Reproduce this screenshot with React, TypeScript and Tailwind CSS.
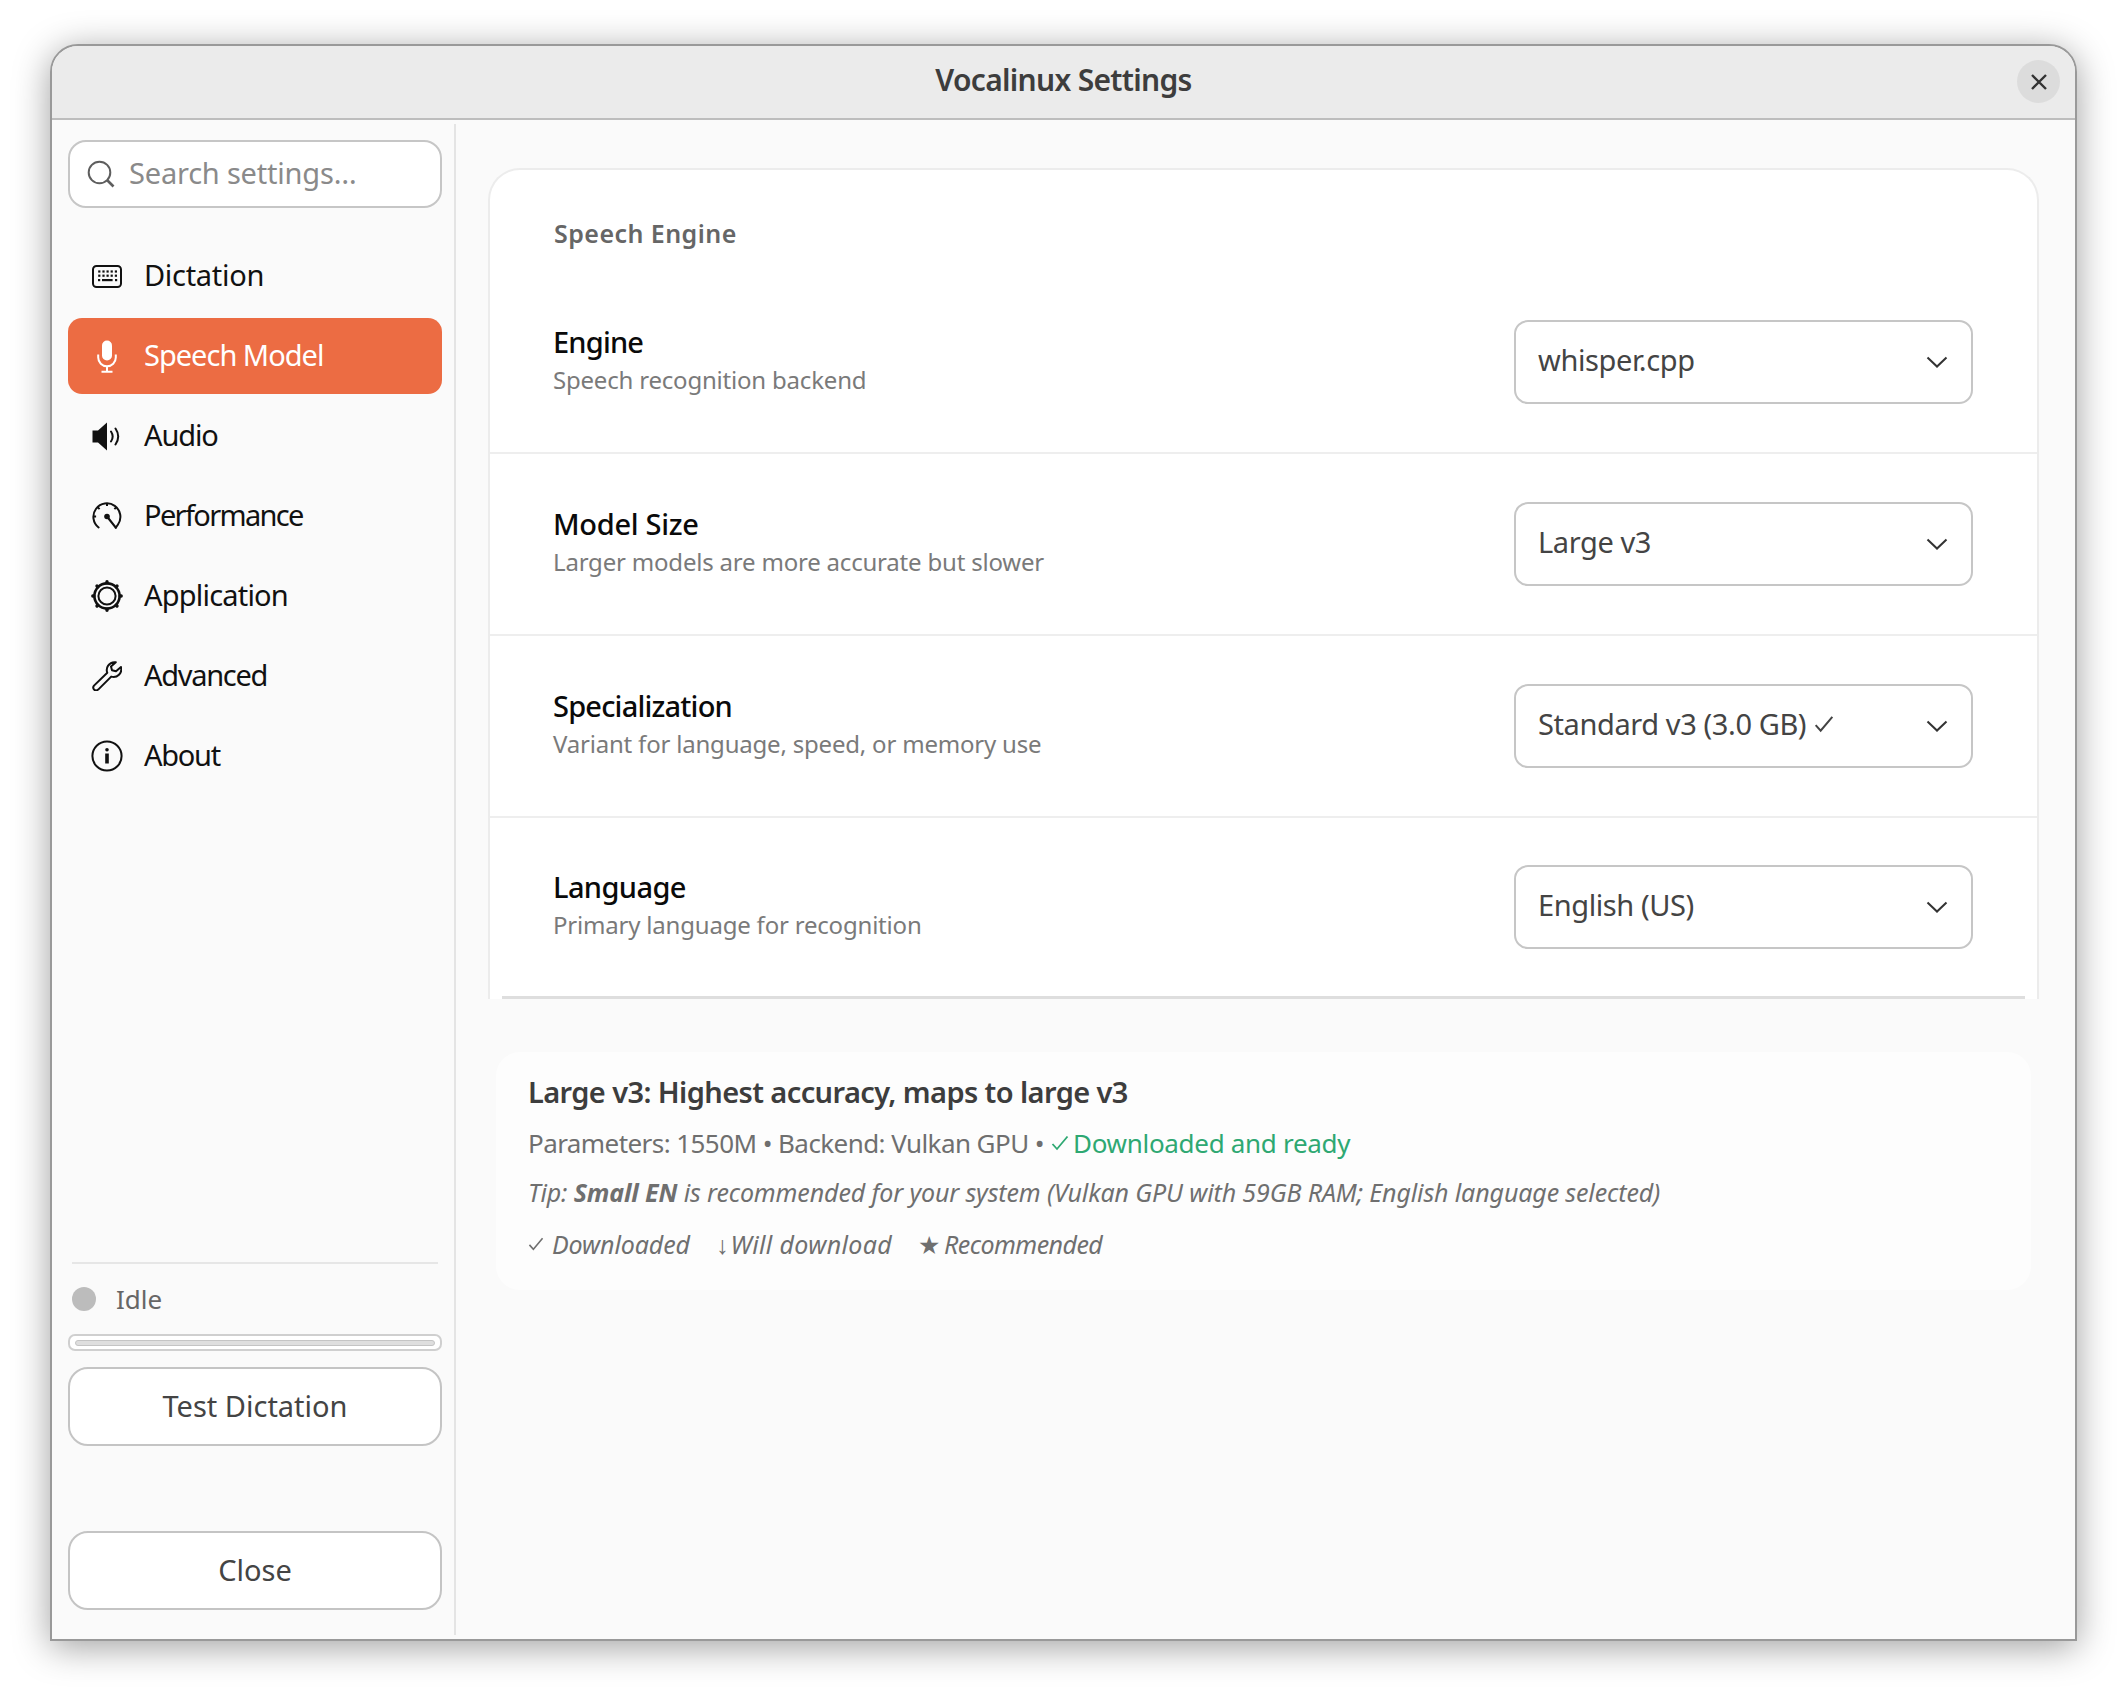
import type { ReactNode } from 'react';

function KeyboardIcon() {
  return (
    <svg viewBox="0 0 30 23" className="h-[23px] w-[30px]" fill="none">
      <rect x="1" y="1" width="28" height="21" rx="3.5" stroke="#111" strokeWidth="2" />
      <g fill="#111">
        <rect x="6.2" y="5.4" width="2.2" height="2.2" /><rect x="10.4" y="5.4" width="2.2" height="2.2" /><rect x="14.5" y="5.4" width="2.2" height="2.2" /><rect x="18.6" y="5.4" width="2.2" height="2.2" /><rect x="22.8" y="5.4" width="2.2" height="2.2" />
        <rect x="6.2" y="9.6" width="2.2" height="2.2" /><rect x="10.4" y="9.6" width="2.2" height="2.2" /><rect x="14.5" y="9.6" width="2.2" height="2.2" /><rect x="18.6" y="9.6" width="2.2" height="2.2" /><rect x="22.8" y="9.6" width="2.2" height="2.2" />
        <rect x="6" y="14" width="2.2" height="2.2" /><rect x="10" y="14" width="10.6" height="2.2" /><rect x="23" y="14" width="2.2" height="2.2" />
      </g>
    </svg>
  );
}

function MicIcon() {
  return (
    <svg viewBox="0 0 20 33" className="h-[33px] w-[20px]" fill="none">
      <rect x="5" y="0.5" width="10" height="20" rx="5" fill="#fff" />
      <path d="M1.2 14.5v3a8.8 8.8 0 0 0 17.6 0v-3M10 26.5v5.2M4.5 31.7h11" stroke="#fff" strokeWidth="2" />
    </svg>
  );
}

function SpeakerIcon() {
  return (
    <svg viewBox="0 0 30 29" className="h-[29px] w-[30px]" fill="none">
      <path d="M0.5 8.5H6L15 0.5v28L6 20.5H0.5z" fill="#111" />
      <path d="M19 9.5c2 3 2 7 0 10M23.5 6.5c3.4 5 3.4 11 0 16" stroke="#111" strokeWidth="2" strokeLinecap="round" />
    </svg>
  );
}

function GaugeIcon() {
  return (
    <svg viewBox="0 0 30 28" className="h-[28px] w-[30px]" fill="none">
      <path d="M6.6 25.5A13.5 13.5 0 1 1 26 22.5L23.8 25.6" stroke="#111" strokeWidth="2" strokeLinecap="round" />
      <path d="M15 1.5v2.6M5.7 5.2l1.9 1.9M24.3 5.2l-1.9 1.9M1.5 14.5h2.6" stroke="#111" strokeWidth="2" />
      <circle cx="15" cy="14.5" r="2.8" fill="#111" />
      <path d="M15 14.5L23.8 25.6" stroke="#111" strokeWidth="2.2" strokeLinecap="round" />
    </svg>
  );
}

function GearIcon() {
  return (
    <svg viewBox="0 0 32 32" className="h-[32px] w-[32px]" fill="none">
      <circle cx="16" cy="16" r="12.6" stroke="#111" strokeWidth="2.6" />
      <circle cx="16" cy="16" r="8.6" stroke="#111" strokeWidth="2" />
      <g stroke="#111" strokeWidth="3.4" strokeLinecap="round">
        <path d="M16 1.8v1M16 29.2v1M1.8 16h1M29.2 16h1M6 6l.7.7M25.3 25.3l.7.7M26 6l-.7.7M6.7 25.3L6 26" />
      </g>
    </svg>
  );
}

function WrenchIcon() {
  return (
    <svg viewBox="0 0 30 30" className="h-[30px] w-[30px]" fill="none">
      <path
        d="M22.5 1.2a7.8 7.8 0 0 0-7.2 10.6L2 24.6a3.2 3.2 0 0 0 0 4 3.2 3.2 0 0 0 4.2 0l13-13a7.8 7.8 0 0 0 9.8-9.6l-5 4.2-4-1-1-3.8 4.8-4.2z"
        stroke="#111"
        strokeWidth="2"
        strokeLinejoin="round"
      />
    </svg>
  );
}

function InfoIcon() {
  return (
    <svg viewBox="0 0 32 32" className="h-[32px] w-[32px]" fill="none">
      <circle cx="16" cy="16" r="14.6" stroke="#111" strokeWidth="2" />
      <rect x="14.2" y="13.5" width="3.6" height="10" fill="#111" />
      <rect x="14.2" y="8" width="3.6" height="3.6" rx="1.8" fill="#111" />
    </svg>
  );
}

function NavItem({ icon, label, active, tracking }: { icon: ReactNode; label: string; active?: boolean; tracking: string }) {
  return (
    <div
      className={
        active
          ? 'flex h-[76px] items-center rounded-[14px] bg-[#ec6c43] text-[#fff]'
          : 'flex h-[76px] items-center text-[#111]'
      }
    >
      <div className="flex w-[76px] items-center justify-center pl-[2px]">{icon}</div>
      <span className={`pb-[2px] text-[29px] ${tracking}`}>{label}</span>
    </div>
  );
}

function Chevron() {
  return (
    <svg viewBox="0 0 22 12" className="h-[12px] w-[22px]" fill="none">
      <path d="M1.5 1.5L11 10.5L20.5 1.5" stroke="#333" strokeWidth="2" />
    </svg>
  );
}

function RowContent({ title, desc, value, titleTracking }: { title: string; desc: string; value: ReactNode; titleTracking: string }) {
  return (
    <div className="flex h-full items-center justify-between pl-[63px] pr-[64px]">
      <div className="flex flex-col pb-[2px]">
        <span className={`text-[29px] font-medium leading-[38px] text-[#0a0a0a] ${titleTracking}`}>{title}</span>
        <span className="text-[24px] leading-[38px] tracking-[-0.2px] text-[#7a7a7a]">{desc}</span>
      </div>
      <div className="flex h-[84px] w-[459px] items-center justify-between rounded-[14px] border-2 border-[#c6c6c6] bg-white pb-[1px] pl-[22px] pr-[23px] text-[29px] tracking-[-0.4px] text-[#444444]">
        <span className="pb-[3px]">{value}</span>
        <Chevron />
      </div>
    </div>
  );
}

function Check({ className }: { className: string }) {
  return (
    <svg viewBox="0 0 18 16" className={className} fill="none">
      <path d="M1.5 9l4.5 5L16.5 1.5" stroke="currentColor" strokeWidth="1.8" />
    </svg>
  );
}

function OutlineButton({ label }: { label: string }) {
  return (
    <div className="flex h-[79px] items-center justify-center rounded-[20px] border-2 border-[#c4c4c4] bg-white pb-[2px] text-[29px] text-[#444444]">
      {label}
    </div>
  );
}

export default function App() {
  return (
    <div className="min-h-[1698px] bg-white pl-[50px] pt-[44px] font-['Noto_Sans',sans-serif]">
      <div className="flex h-[1597px] w-[2027px] flex-col overflow-hidden rounded-t-[28px] border-2 border-[#999999] bg-[#fafafa] shadow-[0_6px_36px_rgba(0,0,0,0.38)]">
        {/* Title bar */}
        <header className="relative flex h-[74px] shrink-0 items-center justify-center border-b-2 border-[#bdbdbd] bg-[#ebebeb] pb-[6px]">
          <span className="text-[30px] font-semibold tracking-[-0.7px] text-[#3d3d3d]">Vocalinux Settings</span>
          <div className="absolute right-[15px] top-[14px] flex h-[43px] w-[43px] items-center justify-center rounded-full bg-[#dcdcdc]">
            <svg viewBox="0 0 18 18" className="h-[18px] w-[18px]" fill="none">
              <path d="M2 2l14 14M16 2L2 16" stroke="#333" strokeWidth="2.4" />
            </svg>
          </div>
        </header>

        <div className="flex min-h-0 flex-1">
          {/* Sidebar */}
          <aside className="my-[4px] flex w-[404px] shrink-0 flex-col border-r-2 border-[#e4e4e4] pb-[25px] pl-[16px] pr-[12px] pt-[16px]">
            <div className="flex h-[68px] items-center rounded-[18px] border-2 border-[#c6c6c6] bg-white pl-[17px]">
              <svg viewBox="0 0 28 28" className="h-[28px] w-[28px]" fill="none">
                <circle cx="12.5" cy="12.5" r="10.8" stroke="#5e5e5e" strokeWidth="2" />
                <path d="M20 20l6.5 6.5" stroke="#5e5e5e" strokeWidth="2.6" />
              </svg>
              <span className="ml-[14px] pb-[3px] text-[29px] tracking-[-0.2px] text-[#8a8a8a]">Search settings…</span>
            </div>

            <nav className="mt-[30px] flex flex-col gap-[4px]">
              <NavItem icon={<KeyboardIcon />} label="Dictation" tracking="tracking-[-0.3px]" />
              <NavItem icon={<MicIcon />} label="Speech Model" active tracking="tracking-[-1px]" />
              <NavItem icon={<SpeakerIcon />} label="Audio" tracking="tracking-[-1.1px]" />
              <NavItem icon={<GaugeIcon />} label="Performance" tracking="tracking-[-1.65px]" />
              <NavItem icon={<GearIcon />} label="Application" tracking="tracking-[-0.8px]" />
              <NavItem icon={<WrenchIcon />} label="Advanced" tracking="tracking-[-1.3px]" />
              <NavItem icon={<InfoIcon />} label="About" tracking="tracking-[-1.3px]" />
            </nav>

            <div className="mt-auto">
              <div className="mx-[4px] h-[2px] bg-[#e6e6e6]" />
              <div className="mt-[23px] flex h-[24px] items-center pl-[4px]">
                <div className="h-[24px] w-[24px] rounded-full bg-[#bcbcbc]" />
                <span className="ml-[20px] text-[26px] text-[#666666]">Idle</span>
              </div>
              <div className="mt-[23px] flex h-[17px] items-center rounded-[7px] border-2 border-[#cfcfcf] bg-white px-[5px]">
                <div className="h-[6px] w-full rounded-[3px] border border-[#c4c4c4] bg-[#dedede]" />
              </div>
              <div className="mt-[16px]">
                <OutlineButton label="Test Dictation" />
              </div>
              <div className="mt-[85px]">
                <OutlineButton label="Close" />
              </div>
            </div>
          </aside>

          {/* Main content */}
          <main className="min-w-0 flex-1 pl-[32px] pr-[36px] pt-[48px]">
            <section className="flex h-[831px] flex-col rounded-t-[32px] border-x-2 border-t-2 border-[#ececec] bg-white">
              <div className="flex h-[102px] shrink-0 items-center pl-[64px] pt-[26px]">
                <span className="text-[25px] font-semibold tracking-[0.45px] text-[#666666]">Speech Engine</span>
              </div>
              <div className="h-[182px] shrink-0 border-b-2 border-[#eeeeee]">
                <RowContent title="Engine" desc="Speech recognition backend" value="whisper.cpp" titleTracking="tracking-[-0.8px]" />
              </div>
              <div className="h-[182px] shrink-0 border-b-2 border-[#eeeeee]">
                <RowContent title="Model Size" desc="Larger models are more accurate but slower" value="Large v3" titleTracking="tracking-[-0.3px]" />
              </div>
              <div className="h-[182px] shrink-0 border-b-2 border-[#eeeeee]">
                <RowContent
                  title="Specialization"
                  desc="Variant for language, speed, or memory use"
                  titleTracking="tracking-[-0.8px]"
                  value={
                    <span className="flex items-center gap-[8px]">
                      Standard v3 (3.0 GB)
                      <Check className="h-[18px] w-[20px] text-[#444444]" />
                    </span>
                  }
                />
              </div>
              <div className="min-h-0 flex-1">
                <RowContent title="Language" desc="Primary language for recognition" value="English (US)" titleTracking="tracking-[-0.6px]" />
              </div>
              <div className="mx-[12px] h-[3px] shrink-0 bg-[#dedede]" />
            </section>

            <section className="mx-[8px] mt-[53px] flex h-[238px] flex-col rounded-[24px] bg-[#fdfdfd] pl-[32px] pt-[21px]">
              <div className="text-[29px] font-semibold leading-[38px] tracking-[-0.6px] text-[#3d3d3d]">
                Large v3: Highest accuracy, maps to large v3
              </div>
              <div className="mt-[13px] flex items-center text-[26px] leading-[38px] text-[#6f6f6f]">
                <span className="tracking-[-0.57px]">Parameters: 1550M • Backend: Vulkan GPU •</span>
                <Check className="ml-[7px] mr-[4px] h-[16px] w-[18px] text-[#2ea872]" />
                <span className="tracking-[-0.3px] text-[#2ea872]">Downloaded and ready</span>
              </div>
              <div className="mt-[11px] text-[25px] italic leading-[38px] tracking-[-0.13px] text-[#6f6f6f]">
                Tip: <span className="font-bold">Small EN</span> is recommended for your system (Vulkan GPU with 59GB RAM; English language selected)
              </div>
              <div className="mt-[14px] flex items-center text-[25px] italic leading-[38px] text-[#6f6f6f]">
                <Check className="mr-[8px] h-[14px] w-[16px] text-[#6f6f6f]" />
                <span className="tracking-[-0.1px]">Downloaded</span>
                <span className="ml-[26px] not-italic">↓</span>
                <span className="ml-[2px] tracking-[0.35px]">Will download</span>
                <span className="ml-[26px] not-italic">★</span>
                <span className="ml-[4px] tracking-[-0.56px]">Recommended</span>
              </div>
            </section>
          </main>
        </div>
      </div>
    </div>
  );
}
